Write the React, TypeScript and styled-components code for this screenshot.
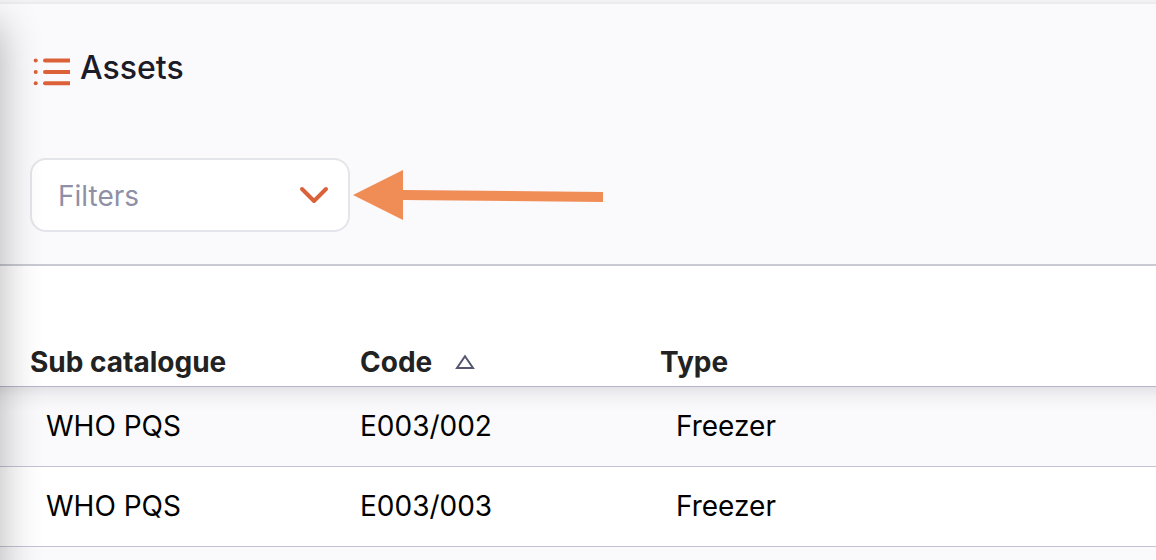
import React from 'react';
import styled, { createGlobalStyle } from 'styled-components';

const GlobalStyle = createGlobalStyle`
  *, *::before, *::after { box-sizing: border-box; }
  body {
    margin: 0;
    background: #fafafc;
    color: #000;
    font-family: Inter, "Liberation Sans", sans-serif;
    font-size: 28px;
    line-height: 36px;
    overflow: hidden;
  }
`;

const Page = styled.div`
  position: relative;
  min-height: 100vh;
  overflow: hidden;
`;

const DrawerShadow = styled.div`
  position: absolute;
  top: 24px;
  bottom: -60px;
  left: -60px;
  width: 60px;
  box-shadow: 0 0 42px rgba(0, 0, 0, 0.3);
  pointer-events: none;
`;

const TopStrip = styled.div`
  height: 4px;
  background: #f2f2f5;
  border-bottom: 2px solid #ebecef;
`;

const AppBar = styled.header`
  display: flex;
  flex-direction: column;
  gap: 70px;
  padding: 44px 30px 32px;
  border-bottom: 2px solid #c9c9d3;
`;

const Heading = styled.div`
  display: flex;
  align-items: center;
  gap: 10px;
  padding-left: 3px;
`;

const Title = styled.h1`
  margin: 0;
  color: #1c1c28;
  font-size: 32px;
  font-weight: 500;
  line-height: 40px;
`;

const ListGlyph = styled.svg`
  width: 37px;
  height: 28px;
  margin-top: 8px;
`;

const Toolbar = styled.div`
  display: flex;
  align-items: center;
  gap: 3px;
`;

const FilterField = styled.label`
  position: relative;
  flex: 0 0 320px;
`;

const FilterSelect = styled.select`
  display: block;
  appearance: none;
  width: 100%;
  height: 74px;
  padding: 2px 60px 0 26px;
  border: 2px solid #e4e4eb;
  border-radius: 16px;
  background: #fff;
  color: #8f90a6;
  font: inherit;
`;

const Chevron = styled.svg`
  position: absolute;
  top: 28px;
  right: 21px;
  width: 30px;
  height: 18px;
  pointer-events: none;
`;

const Pointer = styled.svg`
  width: 251px;
  height: 50px;
`;

const Table = styled.table`
  width: 100%;
  table-layout: fixed;
  border-collapse: separate;
  border-spacing: 0;
`;

const Column = styled.col<{ $width?: number }>`
  width: ${({ $width }) => ($width ? `${$width}px` : 'auto')};
`;

const HeadCell = styled.th<{ $first?: boolean }>`
  height: 121px;
  padding: 0 0 6px ${({ $first }) => ($first ? 30 : 0)}px;
  border-bottom: 1px solid #b8b5ca;
  background: #fff;
  color: #222;
  font-weight: 700;
  text-align: left;
  vertical-align: bottom;
`;

const SortButton = styled.button`
  display: flex;
  align-items: center;
  gap: 23px;
  padding: 0;
  border: 0;
  background: none;
  color: inherit;
  font: inherit;
`;

const SortMark = styled.svg`
  width: 20px;
  height: 16px;
`;

const Row = styled.tr`
  background: #fff;
  &:nth-child(odd) { background: #fafafc; }
  &:first-child {
    background: linear-gradient(#e4e4e8, #f2f2f5 10px, #fafafc 24px);
  }
`;

const Cell = styled.td<{ $indent: number }>`
  height: 80px;
  padding: 0 0 2px ${({ $indent }) => $indent}px;
  border-bottom: 1px solid #c4c3d3;
`;

const assets = [
  { catalogue: 'WHO PQS', code: 'E003/002', type: 'Freezer' },
  { catalogue: 'WHO PQS', code: 'E003/003', type: 'Freezer' },
];

export default function App() {
  return (
    <Page>
      <GlobalStyle />
      <TopStrip />
      <AppBar>
        <Heading>
          <ListGlyph viewBox="0 0 37 28" fill="#dc6139" aria-hidden="true">
            {[2.5, 14, 25.2].map((y) => (
              <g key={y}>
                <circle cx="2.7" cy={y} r="2" />
                <path d={`M37 ${y - 2}H12a2 2 0 0 0 0 4H37z`} />
              </g>
            ))}
          </ListGlyph>
          <Title>Assets</Title>
        </Heading>
        <Toolbar>
          <FilterField>
            <FilterSelect aria-label="Filters" defaultValue="">
              <option value="">Filters</option>
            </FilterSelect>
            <Chevron viewBox="0 0 30 18" fill="none" stroke="#d9623a" strokeWidth="4" strokeLinecap="round" strokeLinejoin="round" aria-hidden="true">
              <path d="M3 3l12 12L27 3" />
            </Chevron>
          </FilterField>
          <Pointer viewBox="0 0 251 50" aria-hidden="true">
            <path d="M0 25L50 0V20L250 22V32L50 30V50z" fill="#f08c56" />
          </Pointer>
        </Toolbar>
      </AppBar>
      <Table>
        <colgroup>
          <Column $width={360} />
          <Column $width={300} />
          <Column />
        </colgroup>
        <thead>
          <tr>
            <HeadCell $first>Sub catalogue</HeadCell>
            <HeadCell aria-sort="ascending">
              <SortButton type="button">
                Code
                <SortMark viewBox="0 0 20 16" fill="none" stroke="#555770" strokeWidth="2" aria-hidden="true">
                  <path d="M10 2.3L18 14H2z" />
                </SortMark>
              </SortButton>
            </HeadCell>
            <HeadCell>Type</HeadCell>
          </tr>
        </thead>
        <tbody>
          {assets.map((asset) => (
            <Row key={asset.code}>
              <Cell $indent={46}>{asset.catalogue}</Cell>
              <Cell $indent={0}>{asset.code}</Cell>
              <Cell $indent={16}>{asset.type}</Cell>
            </Row>
          ))}
        </tbody>
      </Table>
      <DrawerShadow />
    </Page>
  );
}
